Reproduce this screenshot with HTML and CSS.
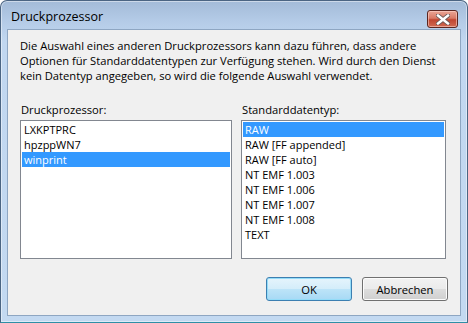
FILE: index.html
```html
<!DOCTYPE html>
<html lang="de">
<head>
    <meta charset="UTF-8">
    <title>Druckprozessor</title>
    <link rel="stylesheet" href="styles.css">
</head>
<body>
<div class="window">
    <div class="titlebar">
        <span class="title">Druckprozessor</span>
        <button class="close" aria-label="Schließen">
            <svg width="14" height="11" viewBox="0 0 14 11">
                <path d="M2 1.5 L12 9.5 M12 1.5 L2 9.5" stroke="#6a5a58" stroke-width="4.2" stroke-linecap="square"/>
                <path d="M2 1.5 L12 9.5 M12 1.5 L2 9.5" stroke="#fff" stroke-width="2.4" stroke-linecap="square"/>
            </svg>
        </button>
    </div>
    <div class="client">
        <p class="intro">Die Auswahl eines anderen Druckprozessors kann dazu führen, dass andere<br>Optionen für Standarddatentypen zur Verfügung stehen. Wird durch den Dienst<br>kein Datentyp angegeben, so wird die folgende Auswahl verwendet.</p>
        <div class="columns">
            <div class="field processors">
                <label>Druckprozessor:</label>
                <ul class="listbox">
                    <li>LXKPTPRC</li>
                    <li>hpzppWN7</li>
                    <li class="selected">winprint</li>
                </ul>
            </div>
            <div class="field datatypes">
                <label>Standarddatentyp:</label>
                <ul class="listbox">
                    <li class="selected">RAW</li>
                    <li>RAW [FF appended]</li>
                    <li>RAW [FF auto]</li>
                    <li>NT EMF 1.003</li>
                    <li>NT EMF 1.006</li>
                    <li>NT EMF 1.007</li>
                    <li>NT EMF 1.008</li>
                    <li>TEXT</li>
                </ul>
            </div>
        </div>
        <div class="buttons">
            <button class="btn default">OK</button>
            <button class="btn">Abbrechen</button>
        </div>
    </div>
</div>
</body>
</html>
```

FILE: styles.css
```css
* {
    box-sizing: border-box;
}
body {
    margin: 0;
    overflow: hidden;
    background: #fff;
    font-family: "Open Sans", "Noto Sans", sans-serif;
    font-size: 11.2px;
    color: #000;
}
.window {
    width: 468px;
    height: 323px;
    border: 1px solid #4b6583;
    border-bottom-color: #2f8fa6;
    border-radius: 7px 7px 0 0;
    background: linear-gradient(#a3bbd8 0, #b4cbe7 20px, #c1d7f0 40px, #c3d9f1 100%);
    box-shadow: inset 0 0 0 1px rgba(255, 255, 255, 0.45);
    display: flex;
    flex-direction: column;
    padding: 0 6px 6px;
}
.titlebar {
    height: 28px;
    display: flex;
    align-items: flex-start;
    justify-content: space-between;
    padding: 0 3px 0 4px;
}
.title {
    margin-top: 8px;
    font-size: 12.5px;
    line-height: 15px;
    color: #000;
}
.close {
    margin-top: 9px;
    width: 31px;
    height: 18px;
    padding: 0;
    border: 1px solid #5b2620;
    border-radius: 3px;
    background: linear-gradient(#eaa595 0, #d97a66 45%, #c04530 55%, #d06a52 100%);
    box-shadow: inset 0 0 0 1px rgba(255, 215, 205, 0.55);
    display: flex;
    align-items: center;
    justify-content: center;
}
.client {
    flex: 1;
    background: #f0f0f0;
    border: 1px solid #8ea6c2;
    padding: 8px 12px 0 12px;
    display: flex;
    flex-direction: column;
}
.intro {
    margin: 0;
    line-height: 15px;
    white-space: nowrap;
}
.columns {
    display: flex;
    gap: 9px;
    margin-top: 19px;
}
.field label {
    display: block;
    line-height: 15px;
    margin-bottom: 3px;
    padding-left: 1px;
}
.processors {
    width: 212px;
}
.datatypes {
    width: 205px;
}
.listbox {
    list-style: none;
    margin: 0;
    height: 139px;
    padding: 1px;
    border: 1px solid #828790;
    background: #fff;
}
.listbox li {
    height: 15px;
    font-size: 11px;
    line-height: 15px;
    padding-left: 2px;
    white-space: nowrap;
}
.listbox li.selected {
    background: #3399ff;
    color: #fff;
}
.buttons {
    display: flex;
    justify-content: flex-end;
    gap: 10px;
    margin-top: 18px;
}
.btn {
    width: 86px;
    height: 24px;
    padding: 0;
    font-family: inherit;
    font-size: 11.2px;
    color: #000;
    border: 1px solid #707070;
    border-radius: 3px;
    background: linear-gradient(#f2f2f2 0, #ebebeb 50%, #dddddd 50%, #cfcfcf 100%);
    box-shadow: inset 0 0 0 1px #fcfcfc;
}
.btn.default {
    border-color: #3c7fb1;
    background: linear-gradient(#e5f4fc 0, #d4edfa 50%, #bde4f8 50%, #a7d9f5 100%);
    box-shadow: inset 0 0 0 1px #94dcf8;
}
```
